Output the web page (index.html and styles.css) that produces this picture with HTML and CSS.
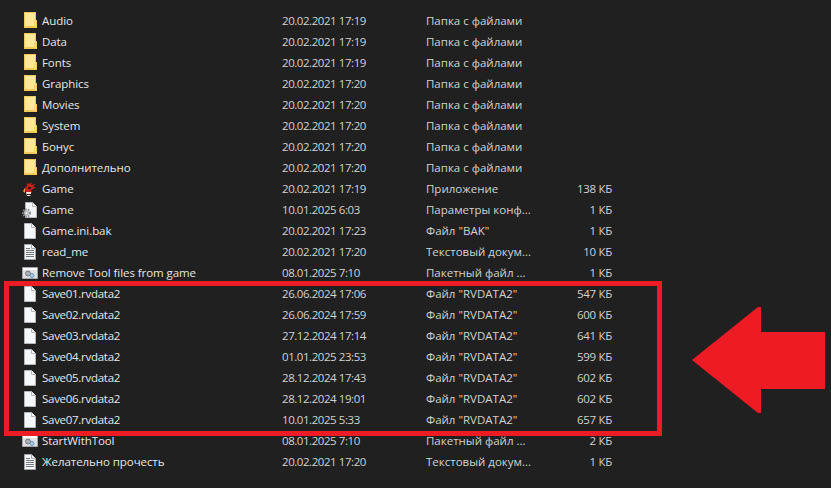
FILE: index.html
```html
<!DOCTYPE html>
<html lang="ru">
<head>
<meta charset="utf-8">
<title>Папка игры</title>
<link rel="stylesheet" href="styles.css">
</head>
<body>
<svg class="defs" width="0" height="0" aria-hidden="true">
  <defs>
    <symbol id="i-folder" viewBox="0 0 13 16">
      <path d="M0 0h12v8h1v8H0z" fill="#f1c85a"/>
      <path d="M1 1h10v13H1z" fill="#ffe897"/>
      <path d="M11 9h1v6h-1z" fill="#ffe28a"/>
      <path d="M10 10h1v5h-1z" fill="#f6d06a"/>
    </symbol>
    <symbol id="i-blank" viewBox="0 0 12 16">
      <path d="M.5.5h7l4 4v11H.5z" fill="#f6f7f9" stroke="#b4b7bb"/>
      <path d="M7.500.5v4h4" fill="#fff" stroke="#b4b7bb"/>
    </symbol>
    <symbol id="i-text" viewBox="0 0 12 16">
      <path d="M.5.5h7l4 4v11H.5z" fill="#f6f7f9" stroke="#a2a5a9"/>
      <path d="M7.500.5v4h4" fill="#fff" stroke="#a2a5a9"/>
      <path d="M2 4.500h4M2 6.500h8M2 8.500h8M2 10.500h8M2 12.500h8" stroke="#74787d" fill="none"/>
    </symbol>
    <symbol id="i-config" viewBox="0 0 16 16">
      <path d="M3.500.5h7l4 4v11h-11z" fill="#f4f5f7" stroke="#b4b7bb"/>
      <path d="M10.500.5v4h4" fill="#fff" stroke="#b4b7bb"/>
      <circle cx="4.500" cy="11" r="3.500" fill="none" stroke="#8b8f94" stroke-width="2" stroke-dasharray="1.500 1"/>
      <circle cx="4.500" cy="11" r="2.500" fill="#b8bbbf"/>
      <circle cx="4.500" cy="11" r="1" fill="#eeeeee"/>
    </symbol>
    <symbol id="i-batch" viewBox="0 0 16 12">
      <path d="M.5.500h15v11H.5z" fill="#dfe1e4" stroke="#a2a5a9"/>
      <path d="M1 1h14v2H1z" fill="#fbfbfb"/>
      <circle cx="6" cy="6.500" r="2.500" fill="#aeb1b5" stroke="#74787d"/>
      <circle cx="10" cy="8.500" r="2" fill="#a9cdec" stroke="#6a93b8"/>
    </symbol>
    <symbol id="i-app" viewBox="0 0 14 14">
      <path d="M1 7L4 4 4 1l2 1 3-2-1 3 4-1-2 3 3 0-3 2-2 1 1 2-2 3H4L3 10z" fill="#c5221c"/>
      <path d="M3 10h5v3l-1 1H4z" fill="#efe3dc"/>
      <path d="M2 6L0 9l2 2z" fill="#e6a13a"/>
      <path d="M5 5h3v2H5zM4 12h4v1H4z" fill="#3a1518"/>
    </symbol>
  </defs>
</svg>

<main class="list">
  <div class="row"><svg class="ico ico-folder"><use href="#i-folder"/></svg><span class="name">Audio</span><span class="date">20.02.2021 17:19</span><span class="type">Папка с файлами</span><span class="size"></span></div>
  <div class="row"><svg class="ico ico-folder"><use href="#i-folder"/></svg><span class="name">Data</span><span class="date">20.02.2021 17:19</span><span class="type">Папка с файлами</span><span class="size"></span></div>
  <div class="row"><svg class="ico ico-folder"><use href="#i-folder"/></svg><span class="name">Fonts</span><span class="date">20.02.2021 17:19</span><span class="type">Папка с файлами</span><span class="size"></span></div>
  <div class="row"><svg class="ico ico-folder"><use href="#i-folder"/></svg><span class="name">Graphics</span><span class="date">20.02.2021 17:20</span><span class="type">Папка с файлами</span><span class="size"></span></div>
  <div class="row"><svg class="ico ico-folder"><use href="#i-folder"/></svg><span class="name">Movies</span><span class="date">20.02.2021 17:20</span><span class="type">Папка с файлами</span><span class="size"></span></div>
  <div class="row"><svg class="ico ico-folder"><use href="#i-folder"/></svg><span class="name">System</span><span class="date">20.02.2021 17:20</span><span class="type">Папка с файлами</span><span class="size"></span></div>
  <div class="row"><svg class="ico ico-folder"><use href="#i-folder"/></svg><span class="name">Бонус</span><span class="date">20.02.2021 17:20</span><span class="type">Папка с файлами</span><span class="size"></span></div>
  <div class="row"><svg class="ico ico-folder"><use href="#i-folder"/></svg><span class="name">Дополнительно</span><span class="date">20.02.2021 17:20</span><span class="type">Папка с файлами</span><span class="size"></span></div>
  <div class="row"><svg class="ico ico-app"><use href="#i-app"/></svg><span class="name">Game</span><span class="date">20.02.2021 17:19</span><span class="type">Приложение</span><span class="size">138 КБ</span></div>
  <div class="row"><svg class="ico ico-wide"><use href="#i-config"/></svg><span class="name">Game</span><span class="date">10.01.2025 6:03</span><span class="type">Параметры конф...</span><span class="size">1 КБ</span></div>
  <div class="row"><svg class="ico ico-doc"><use href="#i-blank"/></svg><span class="name">Game.ini.bak</span><span class="date">20.02.2021 17:23</span><span class="type">Файл "BAK"</span><span class="size">1 КБ</span></div>
  <div class="row"><svg class="ico ico-doc"><use href="#i-text"/></svg><span class="name">read_me</span><span class="date">20.02.2021 17:20</span><span class="type">Текстовый докум...</span><span class="size">10 КБ</span></div>
  <div class="row"><svg class="ico ico-batch"><use href="#i-batch"/></svg><span class="name">Remove Tool files from game</span><span class="date">08.01.2025 7:10</span><span class="type">Пакетный файл ...</span><span class="size">1 КБ</span></div>
  <div class="row"><svg class="ico ico-doc"><use href="#i-blank"/></svg><span class="name name-save">Save01.rvdata2</span><span class="date">26.06.2024 17:06</span><span class="type">Файл "RVDATA2"</span><span class="size">547 КБ</span></div>
  <div class="row"><svg class="ico ico-doc"><use href="#i-blank"/></svg><span class="name name-save">Save02.rvdata2</span><span class="date">26.06.2024 17:59</span><span class="type">Файл "RVDATA2"</span><span class="size">600 КБ</span></div>
  <div class="row"><svg class="ico ico-doc"><use href="#i-blank"/></svg><span class="name name-save">Save03.rvdata2</span><span class="date">27.12.2024 17:14</span><span class="type">Файл "RVDATA2"</span><span class="size">641 КБ</span></div>
  <div class="row"><svg class="ico ico-doc"><use href="#i-blank"/></svg><span class="name name-save">Save04.rvdata2</span><span class="date">01.01.2025 23:53</span><span class="type">Файл "RVDATA2"</span><span class="size">599 КБ</span></div>
  <div class="row"><svg class="ico ico-doc"><use href="#i-blank"/></svg><span class="name name-save">Save05.rvdata2</span><span class="date">28.12.2024 17:43</span><span class="type">Файл "RVDATA2"</span><span class="size">602 КБ</span></div>
  <div class="row"><svg class="ico ico-doc"><use href="#i-blank"/></svg><span class="name name-save">Save06.rvdata2</span><span class="date">28.12.2024 19:01</span><span class="type">Файл "RVDATA2"</span><span class="size">602 КБ</span></div>
  <div class="row"><svg class="ico ico-doc"><use href="#i-blank"/></svg><span class="name name-save">Save07.rvdata2</span><span class="date">10.01.2025 5:33</span><span class="type">Файл "RVDATA2"</span><span class="size">657 КБ</span></div>
  <div class="row"><svg class="ico ico-batch"><use href="#i-batch"/></svg><span class="name">StartWithTool</span><span class="date">08.01.2025 7:10</span><span class="type">Пакетный файл ...</span><span class="size">2 КБ</span></div>
  <div class="row"><svg class="ico ico-doc"><use href="#i-text"/></svg><span class="name">Желательно прочесть</span><span class="date">20.02.2021 17:20</span><span class="type">Текстовый докум...</span><span class="size">1 КБ</span></div>
</main>

<div class="highlight"></div>
<svg class="arrow" viewBox="0 0 133 106" aria-hidden="true"><path d="M0 53 66 0h3v25h64v57H69v24h-3z"/></svg>
</body>
</html>
```

FILE: styles.css
```css
* { box-sizing: border-box; }
html, body { margin: 0; height: 100%; }
body {
  position: relative;
  width: 831px;
  height: 488px;
  overflow: hidden;
  background: #202020;
  color: #e6e6e6;
  font: 11.5px/21px "Open Sans", "Noto Sans", "Liberation Sans", sans-serif;
}
.defs { position: absolute; }
.list { display: flex; flex-direction: column; padding-top: 10px; }
.row {
  display: grid;
  grid-template-columns: 42px 240px 144px 126px 60px;
  height: 21px;
  align-items: center;
  white-space: nowrap;
}
.ico { justify-self: start; display: block; }
.ico-folder { width: 13px; height: 16px; margin: 0 0 1px 24px; }
.ico-doc { width: 12px; height: 16px; margin: 0 0 0 24px; }
.ico-app { width: 14px; height: 14px; margin: 0 0 0 23px; }
.ico-wide { width: 16px; height: 16px; margin: 0 0 0 22px; }
.ico-batch { width: 16px; height: 12px; margin: 0 0 0 22px; }
.name { letter-spacing: -0.07px; }
.name-save { letter-spacing: -0.28px; }
.date, .type, .size { color: #d2d2d2; }
.date { letter-spacing: -0.44px; }
.size { text-align: right; letter-spacing: -0.3px; }
.highlight {
  position: absolute;
  left: 4px; top: 281px;
  width: 658px; height: 155px;
  border: 5px solid #ed1c24;
}
.arrow {
  position: absolute;
  left: 692px; top: 307px;
  width: 133px; height: 106px;
  fill: #ed1c24;
}
```
